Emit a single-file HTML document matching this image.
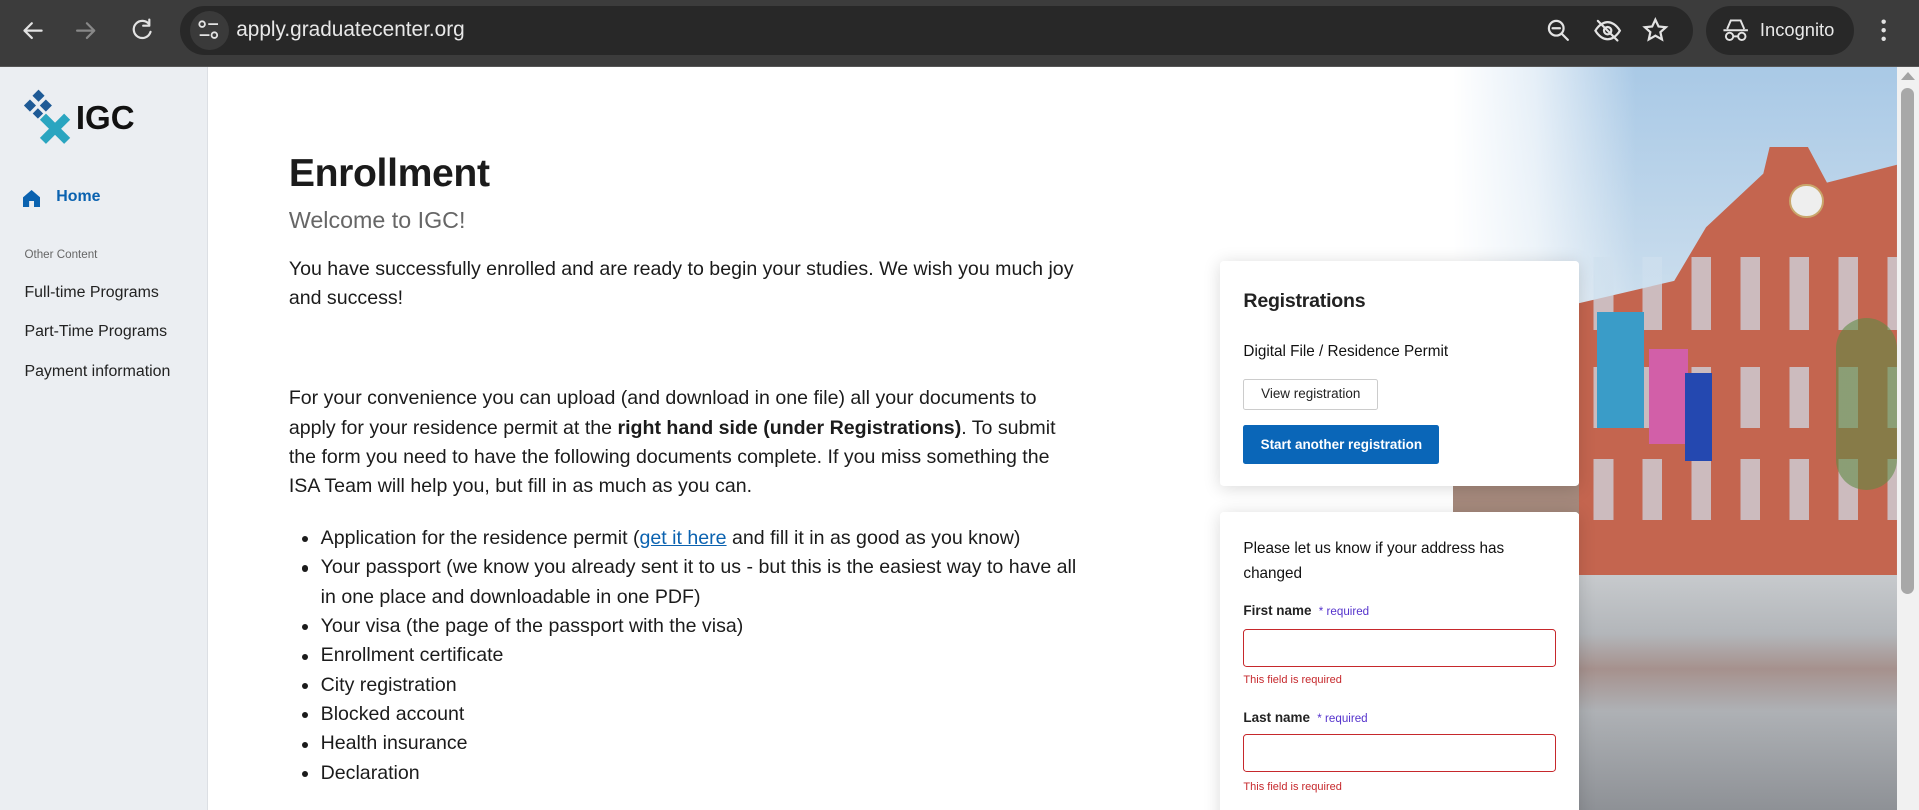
<!DOCTYPE html>
<html><head><meta charset="utf-8"><style>
*{margin:0;padding:0;box-sizing:border-box}
html,body{width:1919px;height:810px;overflow:hidden;background:#fff}
#w{zoom:1.22385;width:1568px;height:662px;position:relative;font-family:"Liberation Sans",sans-serif;overflow:hidden}
.abs{position:absolute}
.top{left:0;top:0;width:1568px;height:55px;background:#3c3c3c;border-bottom:1px solid #555}
.omni{left:147px;top:5px;width:1236px;height:40px;border-radius:20px;background:#282828}
.inc{left:1394px;top:5px;width:121px;height:40px;border-radius:20px;background:#282828;color:#e8e8e8;font-size:15px;line-height:40px;padding-left:44px}
.side{left:0;top:55px;width:170px;height:607px;background:#ebeef2;border-right:1px solid #dcdfe4}
.side div{position:absolute;left:20px;font-size:13px;color:#222}
.main{color:#1b1b1b}
p.t{font-size:16px;line-height:24px;white-space:nowrap;letter-spacing:0}
ul{list-style:none}
ul li{font-size:16px;line-height:24px;padding-left:26px;position:relative;white-space:nowrap}
ul li:before{content:"";position:absolute;left:11px;top:10px;width:5px;height:5px;border-radius:50%;background:#1b1b1b}
.card{background:#fff;box-shadow:0 2px 14px rgba(0,0,0,.15);border-radius:3px}
.lbl{font-size:11px;font-weight:bold;color:#222}
.req{color:#5533cc;font-weight:normal;font-size:9.5px;margin-left:6px}
.inp{border:1px solid #c6282c;border-radius:3px;width:255px;height:31px}
.err{color:#c6282c;font-size:9px}
.win{background:repeating-linear-gradient(90deg,transparent 0 12px,#cfe0ee 12px 28px,transparent 28px 40px);opacity:.7}
</style></head><body><div id="w">
<div class="abs top"></div>
<svg class="abs" style="left:0;top:0" width="140" height="55" fill="none" stroke-width="1.8" stroke-linecap="round" stroke-linejoin="round">
<path d="M34 25H20M26 19l-6 6 6 6" stroke="#e3e3e3"/>
<path d="M63 25h14M71 19l6 6-6 6" stroke="#888"/>
<path d="M122 20a7 7 0 1 0 1 6M122 16v5h-5" stroke="#e3e3e3"/>
</svg>
<div class="abs omni"></div>
<div class="abs" style="left:155px;top:9px;width:32px;height:32px;border-radius:16px;background:#3a3a3a"></div>
<svg class="abs" style="left:160px;top:15px" width="22" height="20" stroke="#e3e3e3" stroke-width="1.5" fill="none"><circle cx="5" cy="5" r="2.3"/><path d="M10 5h8M3 14h8"/><circle cx="15" cy="14" r="2.3"/></svg>
<div class="abs" style="left:193px;top:15px;font-size:17px;color:#e8e8e8">apply.graduatecenter.org</div>
<svg class="abs" style="left:1262px;top:13px" width="110" height="26" stroke="#e3e3e3" stroke-width="1.8" fill="none" stroke-linecap="round">
<circle cx="10" cy="10" r="6"/><path d="M14.5 14.5l5 5M7 10h6"/>
<path d="M42 12c3-5 7-7 10-7s7 2 10 7c-3 5-7 7-10 7s-7-2-10-7zM44 4l16 16"/><circle cx="52" cy="12" r="3"/>
<path d="M91 3l2.6 5.6 6 .6-4.5 4 1.3 6-5.4-3.1-5.4 3.1 1.3-6-4.5-4 6-.6z"/>
</svg>
<div class="abs inc">Incognito</div>
<svg class="abs" style="left:1406px;top:15px" width="24" height="20" stroke="#e3e3e3" stroke-width="1.6" fill="none"><path d="M5 9l3-7h8l3 7M2 10h20"/><circle cx="7" cy="15" r="3"/><circle cx="17" cy="15" r="3"/><path d="M10 15h4"/></svg>
<svg class="abs" style="left:1536px;top:15px" width="6" height="20" fill="#e3e3e3"><circle cx="3" cy="3" r="1.8"/><circle cx="3" cy="10" r="1.8"/><circle cx="3" cy="17" r="1.8"/></svg>

<div class="abs side">
<svg class="abs" style="left:18px;top:18px" width="40" height="46">
<g fill="#1e5a96"><rect x="10" y="2" width="7" height="7" transform="rotate(45 13.5 5.5)"/><rect x="3" y="10" width="7" height="7" transform="rotate(45 6.5 13.5)"/><rect x="16" y="10" width="7" height="7" transform="rotate(45 19.5 13.5)"/><rect x="10" y="17" width="6" height="6" transform="rotate(45 13 20)"/></g>
<g fill="#2aa5c0"><rect x="13" y="29" width="28" height="7" transform="rotate(45 27 32.5)"/><rect x="13" y="29" width="28" height="7" transform="rotate(-45 27 32.5)"/></g>
</svg>
<div style="left:62px;top:27px;font-size:27px;font-weight:bold;color:#111">IGC</div>
<svg class="abs" style="left:19px;top:100px" width="14" height="14"><path d="M7 0L0 6v8h5v-5h4v5h5V6z" fill="#0a62b0"/></svg>
<div style="left:46px;top:99px;color:#0a62b0;font-weight:bold">Home</div>
<div style="top:148px;font-size:9.5px;color:#666">Other Content</div>
<div style="top:177px">Full-time Programs</div>
<div style="top:209px">Part-Time Programs</div>
<div style="top:242px">Payment information</div>
</div>

<div class="abs main" style="left:236px;top:124px">
<div style="font-size:32px;font-weight:bold;color:#1b1b1b;letter-spacing:-0.3px">Enrollment</div>
<div style="font-size:19px;color:#666;margin-top:9px">Welcome to IGC!</div>
<p class="t" style="margin-top:17px">You have successfully enrolled and are ready to begin your studies. We wish you much joy<br>and success!</p>
<p class="t" style="margin-top:58px">For your convenience you can upload (and download in one file) all your documents to<br>apply for your residence permit at the <b>right hand side (under Registrations)</b>. To submit<br>the form you need to have the following documents complete. If you miss something the<br>ISA Team will help you, but fill in as much as you can.</p>
<ul style="margin-top:18px">
<li>Application for the residence permit (<span style="color:#0a62b0;text-decoration:underline">get it here</span> and fill it in as good as you know)</li>
<li>Your passport (we know you already sent it to us - but this is the easiest way to have all<br>in one place and downloadable in one PDF)</li>
<li>Your visa (the page of the passport with the visa)</li>
<li>Enrollment certificate</li>
<li>City registration</li>
<li>Blocked account</li>
<li>Health insurance</li>
<li>Declaration</li>
</ul>
</div>

<!-- photo -->
<div class="abs" style="left:1187px;top:55px;width:363px;height:607px;background:linear-gradient(180deg,#a9c9e6 0%,#cfe0ee 35%,#e8ecef 55%,#b9bdc2 70%,#9fa3a8 100%)"></div>
<div class="abs" style="left:1187px;top:55px;width:150px;height:345px;background:linear-gradient(90deg,#fff 0%,rgba(255,255,255,.7) 45%,rgba(255,255,255,0) 100%)"></div>
<div class="abs" style="left:1187px;top:395px;width:110px;height:25px;background:#a5897c"></div>
<div class="abs" style="left:1290px;top:120px;width:260px;height:365px;background:#c4654f;clip-path:polygon(0 35%,30% 30%,40% 18%,58% 6%,60% 0,72% 0,78% 8%,100% 4%,100% 100%,0 100%)"></div>
<div class="abs win" style="left:1290px;top:210px;width:260px;height:60px"></div>
<div class="abs win" style="left:1290px;top:300px;width:260px;height:50px"></div>
<div class="abs win" style="left:1290px;top:375px;width:260px;height:50px"></div>
<div class="abs" style="left:1462px;top:150px;width:28px;height:28px;border-radius:50%;background:#eee;border:2px solid #c9a66b"></div>
<div class="abs" style="left:1305px;top:255px;width:38px;height:95px;background:#3a9cc8"></div>
<div class="abs" style="left:1347px;top:285px;width:32px;height:78px;background:#d25fa8"></div>
<div class="abs" style="left:1377px;top:305px;width:22px;height:72px;background:#2448b0"></div>
<div class="abs" style="left:1500px;top:260px;width:50px;height:140px;background:#5f8a45;opacity:.6;border-radius:30px"></div>
<div class="abs" style="left:1290px;top:470px;width:260px;height:192px;background:linear-gradient(180deg,#c7cacd 0%,#b3b6ba 25%,#a6918d 40%,#aeb1b5 58%,#8e9196 100%)"></div>

<div class="abs" style="left:1550px;top:55px;width:18px;height:607px;background:#f1f1f1"></div>
<div class="abs" style="left:1553px;top:59px;width:0;height:0;border-left:6px solid transparent;border-right:6px solid transparent;border-bottom:7px solid #a3a3a3"></div>
<div class="abs" style="left:1553px;top:72px;width:11px;height:413px;border-radius:6px;background:#a8a8a8"></div>

<div class="abs card" style="left:997px;top:213px;width:293px;height:184px">
<div class="abs" style="left:19px;top:24px;font-size:16px;color:#222;font-weight:bold;letter-spacing:-0.2px">Registrations</div>
<div class="abs" style="left:19px;top:67px;font-size:12.5px;color:#111">Digital File / Residence Permit</div>
<div class="abs" style="left:19px;top:97px;width:110px;height:25px;border:1px solid #ccc;border-radius:2px;font-size:11px;color:#222;line-height:23px;text-align:center">View registration</div>
<div class="abs" style="left:19px;top:134px;width:160px;height:32px;background:#0a66b8;border-radius:2px;color:#fff;font-size:11px;font-weight:bold;line-height:32px;text-align:center">Start another registration</div>
</div>
<div class="abs card" style="left:997px;top:418px;width:293px;height:260px">
<div class="abs" style="left:19px;top:21px;width:250px;font-size:12.5px;line-height:20px;color:#111">Please let us know if your address has changed</div>
<div class="abs lbl" style="left:19px;top:75px">First name<span class="req">* required</span></div>
<div class="abs inp" style="left:19px;top:96px"></div>
<div class="abs err" style="left:19px;top:133px">This field is required</div>
<div class="abs lbl" style="left:19px;top:162px">Last name<span class="req">* required</span></div>
<div class="abs inp" style="left:19px;top:182px"></div>
<div class="abs err" style="left:19px;top:220px">This field is required</div>
</div>
</div></body></html>
